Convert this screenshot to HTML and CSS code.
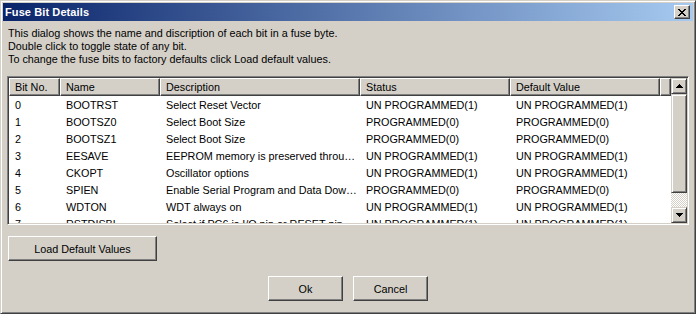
FILE: index.html
```html
<!DOCTYPE html>
<html>
<head>
<meta charset="utf-8">
<link rel="stylesheet" href="styles.css">
</head>
<body>
<div class="window">
  <div class="titlebar">
    <span class="title">Fuse Bit Details</span>
    <div class="close">
      <svg width="8" height="7" viewBox="0 0 8 7"><path d="M0 0h2v1h1v1h2v-1h1v-1h2v1h-1v1h-1v1h-1v1h1v1h1v1h1v1h-2v-1h-1v-1h-2v1h-1v1h-2v-1h1v-1h1v-1h1v-1h-1v-1h-1v-1h-1z" fill="#000"/></svg>
    </div>
  </div>
  <div class="content">
    <p class="intro">This dialog shows the name and discription of each bit in a fuse byte.<br>Double click to toggle state of any bit.<br>To change the fuse bits to factory defaults click Load default values.</p>
    <div class="list">
      <div class="list-main">
        <div class="header">
          <div class="hcell c1">Bit No.</div>
          <div class="hcell c2">Name</div>
          <div class="hcell c3">Description</div>
          <div class="hcell c4">Status</div>
          <div class="hcell c5">Default Value</div>
          <div class="hcell filler"></div>
        </div>
        <div class="rows">
          <div class="row"><span class="cell c1">0</span><span class="cell c2">BOOTRST</span><span class="cell c3">Select Reset Vector</span><span class="cell c4">UN PROGRAMMED(1)</span><span class="cell c5">UN PROGRAMMED(1)</span></div>
          <div class="row"><span class="cell c1">1</span><span class="cell c2">BOOTSZ0</span><span class="cell c3">Select Boot Size</span><span class="cell c4">PROGRAMMED(0)</span><span class="cell c5">PROGRAMMED(0)</span></div>
          <div class="row"><span class="cell c1">2</span><span class="cell c2">BOOTSZ1</span><span class="cell c3">Select Boot Size</span><span class="cell c4">PROGRAMMED(0)</span><span class="cell c5">PROGRAMMED(0)</span></div>
          <div class="row"><span class="cell c1">3</span><span class="cell c2">EESAVE</span><span class="cell c3">EEPROM memory is preserved throu…</span><span class="cell c4">UN PROGRAMMED(1)</span><span class="cell c5">UN PROGRAMMED(1)</span></div>
          <div class="row"><span class="cell c1">4</span><span class="cell c2">CKOPT</span><span class="cell c3">Oscillator options</span><span class="cell c4">UN PROGRAMMED(1)</span><span class="cell c5">UN PROGRAMMED(1)</span></div>
          <div class="row"><span class="cell c1">5</span><span class="cell c2">SPIEN</span><span class="cell c3">Enable Serial Program and Data Dow…</span><span class="cell c4">PROGRAMMED(0)</span><span class="cell c5">PROGRAMMED(0)</span></div>
          <div class="row"><span class="cell c1">6</span><span class="cell c2">WDTON</span><span class="cell c3">WDT always on</span><span class="cell c4">UN PROGRAMMED(1)</span><span class="cell c5">UN PROGRAMMED(1)</span></div>
          <div class="row"><span class="cell c1">7</span><span class="cell c2">RSTDISBL</span><span class="cell c3">Select if PC6 is I/O pin or RESET pin</span><span class="cell c4">UN PROGRAMMED(1)</span><span class="cell c5">UN PROGRAMMED(1)</span></div>
        </div>
      </div>
      <div class="scrollbar">
        <div class="sb-btn"><svg width="7" height="4" viewBox="0 0 7 4"><path d="M3 0h1v1h1v1h1v1h1v1h-7v-1h1v-1h1v-1h1z" fill="#000"/></svg></div>
        <div class="sb-thumb"></div>
        <div class="sb-track"></div>
        <div class="sb-btn"><svg width="7" height="4" viewBox="0 0 7 4"><path d="M0 0h7v1h-1v1h-1v1h-1v1h-1v-1h-1v-1h-1v-1h-1z" fill="#000"/></svg></div>
      </div>
    </div>
    <div class="load-row"><button class="btn load">Load Default Values</button></div>
    <div class="actions">
      <button class="btn">Ok</button>
      <button class="btn">Cancel</button>
    </div>
  </div>
</div>
</body>
</html>
```

FILE: styles.css
```css
* { box-sizing: border-box; }
html, body { margin: 0; padding: 0; }
body {
  width: 696px;
  height: 314px;
  overflow: hidden;
  background: #D4D0C8;
  font-family: "Liberation Sans", Arial, sans-serif;
  font-size: 10.8px;
  color: #000;
}
.window {
  width: 696px;
  height: 314px;
  background: #D4D0C8;
  border: 1px solid;
  border-color: #D4D0C8 #404040 #404040 #D4D0C8;
  box-shadow: inset 1px 1px #fff, inset -1px -1px #808080;
  padding: 2px;
  display: flex;
  flex-direction: column;
}
.titlebar {
  height: 18px;
  background: linear-gradient(to right, #0A246A, #A6CAF0);
  display: flex;
  align-items: center;
  justify-content: space-between;
  padding: 0 3px 0 2px;
}
.title {
  color: #fff;
  font-weight: bold;
  font-size: 11px;
  letter-spacing: 0.1px;
}
.close {
  width: 16px;
  height: 14px;
  background: #D4D0C8;
  border: 1px solid;
  border-color: #fff #404040 #404040 #fff;
  box-shadow: inset -1px -1px #808080;
  display: flex;
  align-items: center;
  justify-content: center;
  padding-right: 1px;
}
.close svg { display: block; }
.content {
  flex: 1;
  display: flex;
  flex-direction: column;
  padding: 6px 4px 0 4px;
}
.intro {
  margin: 0 0 10px 1px;
  line-height: 13px;
}
.list {
  height: 149px;
  border: 1px solid;
  border-color: #808080 #fff #fff #808080;
  box-shadow: inset 1px 1px #404040, inset -1px -1px #D4D0C8;
  padding: 1px;
  background: #fff;
  display: flex;
}
.list-main {
  flex: 1;
  display: flex;
  flex-direction: column;
  overflow: hidden;
}
.header {
  display: flex;
  height: 18px;
  flex: none;
}
.hcell {
  height: 18px;
  background: #D4D0C8;
  border-top: 1px solid #fff;
  border-left: 1px solid #fff;
  border-right: 1px solid #404040;
  border-bottom: 1px solid #404040;
  box-shadow: inset -1px -1px #808080;
  padding: 2px 0 0 5px;
  white-space: nowrap;
  overflow: hidden;
  line-height: 13px;
}
.c1 { width: 51px; }
.c2 { width: 100px; }
.c3 { width: 200px; }
.c4 { width: 150px; }
.c5 { width: 150px; }
.hcell.filler { flex: 1; width: auto; }
.rows {
  flex: 1;
  overflow: hidden;
}
.row {
  display: flex;
  height: 17px;
  align-items: center;
}
.cell {
  flex: none;
  padding-left: 6px;
  white-space: nowrap;
  overflow: hidden;
}
.scrollbar {
  width: 16px;
  flex: none;
  display: flex;
  flex-direction: column;
}
.sb-btn, .sb-thumb {
  background: #D4D0C8;
  border: 1px solid;
  border-color: #D4D0C8 #404040 #404040 #D4D0C8;
  box-shadow: inset 1px 1px #fff, inset -1px -1px #808080;
}
.sb-btn {
  height: 16px;
  flex: none;
  display: flex;
  align-items: center;
  justify-content: center;
}
.sb-btn svg { display: block; }
.sb-thumb { height: 99px; flex: none; }
.sb-track {
  flex: 1;
  background: repeating-conic-gradient(#fff 0 25%, #D4D0C8 0 50%) 0 0 / 2px 2px;
}
.btn {
  font-family: inherit;
  font-size: 10.8px;
  color: #000;
  background: #D4D0C8;
  border: 1px solid;
  border-color: #fff #404040 #404040 #fff;
  box-shadow: inset -1px -1px #808080, inset 1px 1px #D4D0C8;
  height: 25px;
  width: 75px;
  padding: 0;
  margin: 0;
}
.load-row {
  margin-top: 11px;
  padding-left: 1px;
  display: flex;
}
.btn.load { width: 149px; }
.actions {
  margin-top: 15px;
  display: flex;
  justify-content: center;
  gap: 10px;
}
```
